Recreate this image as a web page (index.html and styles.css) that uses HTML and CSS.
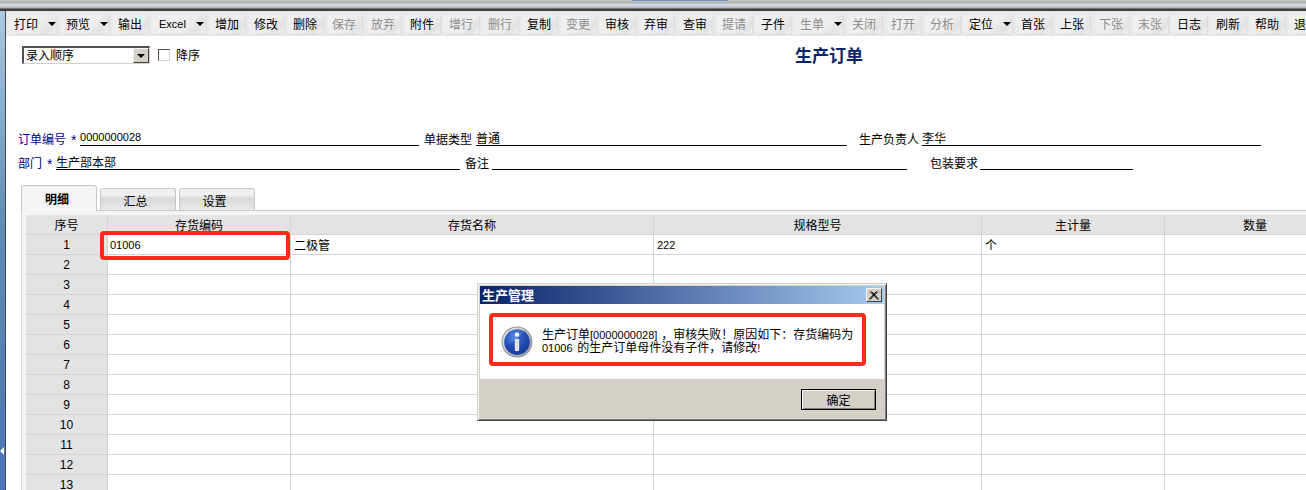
FILE: index.html
```html
<!DOCTYPE html>
<html lang="zh-CN">

<head>
    <meta charset="UTF-8">
    <title>生产订单</title>
    <link rel="stylesheet" href="styles.css">
</head>

<body>
    <div class="top-bands"></div>
    <div class="app">
        <div class="side-strip"><span class="side-arrow"></span></div>
        <div class="main">
            <div class="toolbar">
                <span class="tool wide">打印<i class="caret"></i></span>
                <span class="tool wide">预览<i class="caret"></i></span>
                <span class="tool">输出</span>
                <span class="tool excel"><b class="latin">Excel</b><i class="caret"></i></span>
                <span class="tool">增加</span>
                <span class="tool">修改</span>
                <span class="tool">删除</span>
                <span class="tool off">保存</span>
                <span class="tool off">放弃</span>
                <span class="tool">附件</span>
                <span class="tool off">增行</span>
                <span class="tool off">删行</span>
                <span class="tool">复制</span>
                <span class="tool off">变更</span>
                <span class="tool">审核</span>
                <span class="tool">弃审</span>
                <span class="tool">查审</span>
                <span class="tool off">提请</span>
                <span class="tool">子件</span>
                <span class="tool wide off">生单<i class="caret"></i></span>
                <span class="tool off">关闭</span>
                <span class="tool off">打开</span>
                <span class="tool off">分析</span>
                <span class="tool wide">定位<i class="caret"></i></span>
                <span class="tool">首张</span>
                <span class="tool">上张</span>
                <span class="tool off">下张</span>
                <span class="tool off">末张</span>
                <span class="tool">日志</span>
                <span class="tool">刷新</span>
                <span class="tool">帮助</span>
                <span class="tool">退出</span>
            </div>

            <div class="sort-row">
                <div class="combo">
                    <span class="combo-text">录入顺序</span>
                    <span class="combo-btn"><i class="caret"></i></span>
                </div>
                <span class="check"></span>
                <span class="check-label">降序</span>
                <h1 class="title">生产订单</h1>
            </div>

            <div class="form-row first">
                <label class="field-label required">订单编号</label>
                <span class="star">*</span>
                <span class="field-value latin w-order">0000000028</span>
                <label class="field-label gap-type">单据类型</label>
                <span class="field-value w-type">普通</span>
                <label class="field-label gap-owner">生产负责人</label>
                <span class="field-value w-owner">李华</span>
            </div>
            <div class="form-row">
                <label class="field-label required">部门</label>
                <span class="star">*</span>
                <span class="field-value w-dept">生产部本部</span>
                <label class="field-label gap-note">备注</label>
                <span class="field-value w-note"></span>
                <label class="field-label gap-pack">包装要求</label>
                <span class="field-value w-pack"></span>
            </div>

            <div class="tabs">
                <span class="tab active">明细</span>
                <span class="tab">汇总</span>
                <span class="tab">设置</span>
            </div>

            <div class="panel">
                <table class="grid">
                    <colgroup>
                        <col class="c-no">
                        <col class="c-code">
                        <col class="c-name">
                        <col class="c-spec">
                        <col class="c-unit">
                        <col class="c-qty">
                    </colgroup>
                    <thead>
                        <tr>
                            <th>序号</th>
                            <th>存货编码</th>
                            <th>存货名称</th>
                            <th>规格型号</th>
                            <th>主计量</th>
                            <th>数量</th>
                        </tr>
                    </thead>
                    <tbody>
                        <tr><th class="latin">1</th><td class="latin pad-code">01006</td><td>二极管</td><td class="latin">222</td><td>个</td><td></td></tr>
                        <tr><th class="latin">2</th><td></td><td></td><td></td><td></td><td></td></tr>
                        <tr><th class="latin">3</th><td></td><td></td><td></td><td></td><td></td></tr>
                        <tr><th class="latin">4</th><td></td><td></td><td></td><td></td><td></td></tr>
                        <tr><th class="latin">5</th><td></td><td></td><td></td><td></td><td></td></tr>
                        <tr><th class="latin">6</th><td></td><td></td><td></td><td></td><td></td></tr>
                        <tr><th class="latin">7</th><td></td><td></td><td></td><td></td><td></td></tr>
                        <tr><th class="latin">8</th><td></td><td></td><td></td><td></td><td></td></tr>
                        <tr><th class="latin">9</th><td></td><td></td><td></td><td></td><td></td></tr>
                        <tr><th class="latin">10</th><td></td><td></td><td></td><td></td><td></td></tr>
                        <tr><th class="latin">11</th><td></td><td></td><td></td><td></td><td></td></tr>
                        <tr><th class="latin">12</th><td></td><td></td><td></td><td></td><td></td></tr>
                        <tr><th class="latin">13</th><td></td><td></td><td></td><td></td><td></td></tr>
                    </tbody>
                </table>
            </div>
        </div>
    </div>

    <!-- red marks drawn over the screenshot -->
    <div class="mark mark-cell"></div>

    <div class="dialog">
        <div class="dialog-title">
            <span>生产管理</span>
            <span class="dialog-close">
                <svg width="10" height="9" viewBox="0 0 10 9">
                    <path d="M1 0.5 L9 8.5 M2.5 0.5 L10 8.5 M9 0.5 L1 8.5 M7.5 0.5 L0 8.5" stroke="#000" stroke-width="1" fill="none" />
                </svg>
            </span>
        </div>
        <div class="dialog-body">
            <div class="mark mark-message"></div>
            <svg class="info-icon" width="32" height="32" viewBox="0 0 32 32">
                <defs>
                    <radialGradient id="infoBlue" cx="45%" cy="30%" r="75%">
                        <stop offset="0" stop-color="#5f8fe6" />
                        <stop offset="0.55" stop-color="#2a55bd" />
                        <stop offset="1" stop-color="#12308c" />
                    </radialGradient>
                    <linearGradient id="infoRing" x1="0" y1="0" x2="1" y2="1">
                        <stop offset="0" stop-color="#f2f2f2" />
                        <stop offset="1" stop-color="#8a8f9a" />
                    </linearGradient>
                </defs>
                <circle cx="16" cy="16" r="15.5" fill="#8d929c" />
                <circle cx="16" cy="16" r="14.6" fill="url(#infoRing)" />
                <circle cx="16" cy="16" r="12.8" fill="url(#infoBlue)" />
                <path d="M4 20 Q14 17 24 5 Q29 10 28.5 17 Q26 27 16 28.8 Q7 28 4 20 Z" fill="#1a3fa6" opacity="0.45" />
                <circle cx="16" cy="8.6" r="2.2" fill="#fff" />
                <path d="M13.8 13 H18.2 V24.5 Q16 26 13.8 24.5 Z" fill="#e4e4e8" />
            </svg>
            <p class="dialog-text">生产订单<span class="latin order-no">[0000000028]</span>，审核失败！原因如下：存货编码为<br><span class="latin">01006</span> 的生产订单母件没有子件，请修改<span class="latin">!</span></p>
        </div>
        <div class="dialog-foot">
            <button class="ok-btn">确定</button>
        </div>
    </div>
</body>

</html>
```

FILE: styles.css
```css
* {
    box-sizing: border-box;
}

html,
body {
    height: 100%;
    margin: 0;
    overflow: hidden;
}

body {
    background-color: #ffffff;
    color: #000000;
    font-family: "Noto Sans CJK SC", "Liberation Sans", sans-serif;
    font-size: 12px;
    line-height: 14px;
}

.latin {
    font-family: "Liberation Sans", "Noto Sans CJK SC", sans-serif;
    font-weight: normal;
}

.top-bands {
    height: 11px;
    background:
        linear-gradient(#6c92c6, #6c92c6) 632px 0 / 96px 1px no-repeat,
        linear-gradient(#c9cbcc 0, #a9abae 3px, #d8dbe2 4px, #c3c7d0 7px, #9a9ea8 8px, #4a4a4a 9px, #333333 11px);
}

.app {
    display: flex;
    height: 479px;
}

.side-strip {
    width: 6px;
    flex: none;
    display: flex;
    align-items: flex-end;
    padding-bottom: 35px;
    background: linear-gradient(#a9c8e2 0, #5f8cb4 45%, #4a74b6 100%);
    border-right: 1px solid #4a4a4a;
}

.side-arrow {
    width: 0;
    height: 0;
    border-top: 4px solid transparent;
    border-bottom: 4px solid transparent;
    border-right: 4px solid #ffffff;
}

.main {
    flex: 1;
    min-width: 0;
}

.toolbar {
    display: flex;
    gap: 4px;
    height: 25px;
    padding: 3px 0 0 3px;
    background-color: #e9e9e9;
    overflow: hidden;
}

.tool {
    flex: none;
    display: flex;
    align-items: center;
    justify-content: center;
    width: 35px;
    height: 20px;
    padding-right: 1px;
    border-radius: 2px;
    background: linear-gradient(135deg, #eeeeee 60%, #e2e2e2 80%, #f2f2f2);
    box-shadow: 1px 1px 0 #dcdcdc;
}

.tool.wide {
    justify-content: flex-start;
    width: 48px;
    padding-left: 5px;
    padding-right: 0;
}

.tool.excel {
    justify-content: flex-start;
    width: 54px;
    padding-left: 7px;
    padding-right: 0;
    font-size: 11px;
}

.tool.off {
    color: #8c8c8c;
}

.caret {
    display: block;
    width: 0;
    height: 0;
    border-left: 4px solid transparent;
    border-right: 4px solid transparent;
    border-top: 4px solid #000000;
}

.tool .caret {
    margin-left: auto;
    margin-right: 1px;
}

.tool.excel .caret {
    margin-right: 2px;
}

.sort-row {
    display: flex;
    align-items: center;
    height: 18px;
    margin-top: 10px;
    padding-left: 16px;
}

.combo {
    display: flex;
    justify-content: space-between;
    width: 128px;
    height: 18px;
    border: 1px solid #d4d0c8;
    border-top: 2px solid #505050;
    border-left: 2px solid #505050;
}

.combo-text {
    padding-left: 2px;
    line-height: 13px;
}

.combo-btn {
    display: flex;
    align-items: center;
    justify-content: center;
    width: 16px;
    background-color: #d4d0c8;
    border: 1px solid #404040;
    border-top-color: #f4f4f4;
    border-left-color: #f4f4f4;
}

.check {
    width: 12px;
    height: 12px;
    margin-left: 8px;
    border: 1px solid #d4d0c8;
    border-top-color: #505050;
    border-left-color: #505050;
}

.check-label {
    margin-left: 6px;
}

.title {
    margin: 0 0 0 595px;
    color: #0a246a;
    font-size: 17px;
    line-height: 18px;
    font-weight: bold;
}

.form-row {
    display: flex;
    align-items: flex-end;
    height: 24px;
    padding-left: 12px;
}

.form-row.first {
    margin-top: 56px;
    height: 26px;
}

.field-label {
    flex: none;
    padding-top: 2px;
}

.field-label.required {
    color: #000080;
}

.star {
    flex: none;
    width: 8px;
    margin-left: 5px;
    margin-right: 1px;
    color: #000080;
    font-family: "Liberation Sans", sans-serif;
    font-size: 14px;
    line-height: 12px;
}

.field-value {
    flex: none;
    height: 15px;
    border-bottom: 1px solid #000000;
    line-height: 13px;
    white-space: nowrap;
}

.w-order {
    width: 339px;
    font-size: 11px;
}

.gap-type {
    margin-left: 5px;
}

.w-type {
    width: 371px;
    margin-left: 4px;
}

.gap-owner {
    margin-left: 12px;
}

.w-owner {
    width: 339px;
    margin-left: 3px;
}

.w-dept {
    width: 404px;
}

.gap-note {
    margin-left: 5px;
}

.w-note {
    width: 415px;
    margin-left: 3px;
}

.gap-pack {
    margin-left: 23px;
}

.w-pack {
    width: 153px;
    margin-left: 2px;
}

.tabs {
    display: flex;
    align-items: flex-end;
    height: 25px;
    margin-top: 16px;
    margin-left: 15px;
    border-bottom: 1px solid #c8c8c8;
}

.tab {
    display: flex;
    align-items: center;
    justify-content: center;
    width: 76px;
    height: 22px;
    margin-right: 3px;
    padding: 3px 5px 0 0;
    border: 1px solid #c8c8c8;
    border-bottom: none;
    border-radius: 3px 3px 0 0;
    background: linear-gradient(#f0f0f0 0, #f0f0f0 30%, #d8d8d8 45%, #e8e8e8 100%);
}

.tab.active {
    height: 26px;
    margin-bottom: -1px;
    padding: 0 4px 0 0;
    background: #f4f4f4;
    font-weight: bold;
}

.panel {
    margin-left: 15px;
    padding: 4px 0 0 4px;
    border-left: 1px solid #dcdcdc;
    background-color: #f4f4f4;
    overflow: hidden;
}

.grid {
    width: 1320px;
    table-layout: fixed;
    border-collapse: separate;
    border-spacing: 0;
}

.c-no {
    width: 82px;
}

.c-code {
    width: 183px;
}

.c-name {
    width: 363px;
}

.c-spec {
    width: 328px;
}

.c-unit {
    width: 183px;
}

.c-qty {
    width: 181px;
}

.grid th,
.grid td {
    height: 20px;
    padding: 0;
    border-right: 1px solid #d4d4d4;
    border-bottom: 1px solid #d4d4d4;
    font-weight: normal;
    overflow: hidden;
}

.grid th {
    background-color: #e3e3e3;
    text-align: center;
}

.grid td {
    padding-left: 3px;
    background-color: #ffffff;
    font-size: 12px;
}

.grid td.latin {
    font-size: 11px;
}

.grid td.pad-code {
    padding-left: 2px;
}

.grid tbody th {
    font-size: 12px;
}

.mark {
    position: absolute;
    border: 4px solid #ff2a1a;
    border-radius: 4px;
}

.mark-cell {
    left: 100px;
    top: 231px;
    width: 190px;
    height: 29px;
}

.mark-message {
    left: 9px;
    top: 9px;
    width: 377px;
    height: 53px;
}

.dialog {
    position: absolute;
    left: 477px;
    top: 283px;
    width: 410px;
    height: 138px;
    padding: 2px;
    display: flex;
    flex-direction: column;
    background-color: #d4d0c8;
    border: 1px solid #d4d0c8;
    border-right-color: #404040;
    border-bottom-color: #404040;
    box-shadow: inset 1px 1px 0 #f4f4f4, inset -1px -1px 0 #808080;
}

.dialog-title {
    display: flex;
    align-items: center;
    justify-content: space-between;
    flex: none;
    height: 18px;
    padding: 0 2px 0 2px;
    background: linear-gradient(90deg, #0a246a, #a6caf0);
    color: #ffffff;
    font-size: 13px;
    font-weight: bold;
}

.dialog-close {
    display: flex;
    align-items: center;
    justify-content: center;
    width: 16px;
    height: 14px;
    background-color: #d4d0c8;
    border: 1px solid #404040;
    border-top-color: #f4f4f4;
    border-left-color: #f4f4f4;
}

.dialog-body {
    position: relative;
    display: flex;
    align-items: flex-start;
    flex: none;
    height: 75px;
    background-color: #ffffff;
}

.info-icon {
    flex: none;
    margin: 22px 0 0 21px;
}

.dialog-text {
    margin: 23px 0 0 9px;
    line-height: 13px;
    white-space: nowrap;
}

.dialog-text .latin {
    margin-right: 2px;
    font-size: 11px;
    line-height: 10px;
}

.dialog-text .order-no {
    margin-right: 4px;
}

.dialog-foot {
    display: flex;
    justify-content: flex-end;
    flex: 1;
    padding: 10px 8px 0 0;
}

.ok-btn {
    width: 75px;
    height: 21px;
    padding: 0;
    background-color: #d4d0c8;
    border: 1px solid #000000;
    box-shadow: inset 1px 1px 0 #f4f4f4, inset -1px -1px 0 #808080;
    font-family: inherit;
    font-size: 12px;
    color: #000000;
}
```
